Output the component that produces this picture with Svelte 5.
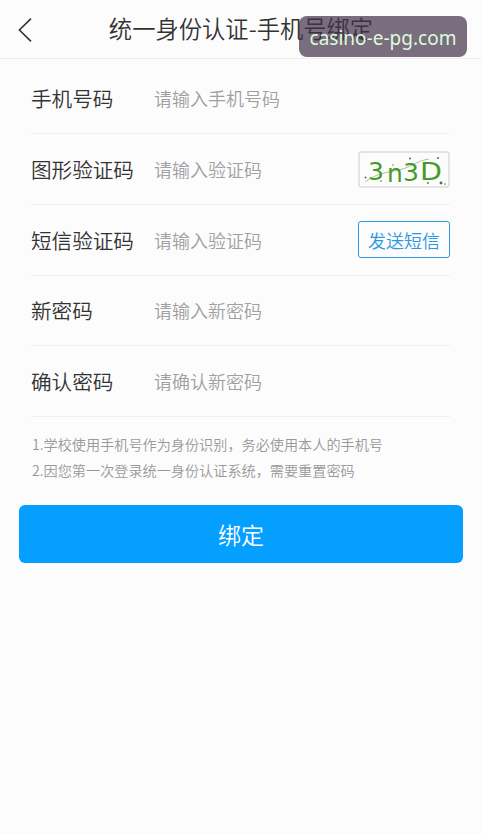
<script>
  let fields = $state([
    { id: "phone", label: "手机号码", hint: "请输入手机号码", type: "tel", value: "" },
    { id: "captcha", label: "图形验证码", hint: "请输入验证码", type: "text", value: "" },
    { id: "sms", label: "短信验证码", hint: "请输入验证码", type: "text", value: "" },
    { id: "password", label: "新密码", hint: "请输入新密码", type: "password", value: "" },
    { id: "confirm", label: "确认密码", hint: "请确认新密码", type: "password", value: "" },
  ]);
</script>

<div class="page">
  <header>
    <button class="back" aria-label="返回">
      <svg width="14" height="26" viewBox="0 0 14 26">
        <path d="M13 1.6 L1.4 13 L13 24.4" fill="none" stroke="#333" stroke-width="1.6" />
      </svg>
    </button>
    <h1>统一身份认证-手机号绑定</h1>
    <span class="site-tag">casino-e-pg.com</span>
  </header>

  <form>
    {#each fields as field (field.id)}
      <div class="row">
        <label for={field.id}>{field.label}</label>
        <input id={field.id} type={field.type} placeholder={field.hint} bind:value={field.value} />

        {#if field.id === "captcha"}
          <svg class="captcha" width="92" height="37" viewBox="0 0 92 37">
            <rect x="1" y="1" width="90" height="35" rx="2.5" fill="#fcfdfa" stroke="#dcdce0" stroke-width="1.5" />
            <path d="M7 31 C22 19 38 22 50 16 S65 9 71 8" fill="none" stroke="#a9c2a0" stroke-width="1" />
            <g class="chars">
              <text x="10" y="29">3</text>
              <text x="29" y="31">n</text>
              <text x="45" y="30">3</text>
              <text x="62" y="29" textLength="22" lengthAdjust="spacingAndGlyphs">D</text>
            </g>
            <g fill="#4b7043">
              <circle cx="52" cy="7.5" r="1" />
              <circle cx="80" cy="7" r="1" />
              <circle cx="7.5" cy="26.5" r="1" />
              <circle cx="23" cy="30" r="0.8" />
              <circle cx="70" cy="32" r="0.9" />
              <circle cx="83" cy="32" r="1.4" />
              <circle cx="87" cy="33" r="0.8" />
              <circle cx="35" cy="14" r="0.7" />
            </g>
          </svg>
        {:else if field.id === "sms"}
          <button class="send" type="button">发送短信</button>
        {/if}
      </div>
    {/each}

    <div class="notes">
      <p>1.学校使用手机号作为身份识别，务必使用本人的手机号</p>
      <p>2.因您第一次登录统一身份认证系统，需要重置密码</p>
    </div>

    <button class="submit" type="button">绑定</button>
  </form>
</div>

<style>
  :global(body) {
    background: #fdfcfc;
  }

  .page {
    min-height: 834px;
    font-family: "Noto Sans CJK SC", sans-serif;
    font-weight: 350;
    color: #333;
  }

  button,
  input {
    font: inherit;
    padding: 0;
    border: 0;
    background: none;
  }

  header {
    position: relative;
    display: flex;
    align-items: center;
    justify-content: center;
    box-sizing: border-box;
    height: 59px;
    border-bottom: 1px solid #eeeeee;
  }

  .back {
    position: absolute;
    left: 18px;
    top: 17px;
    height: 26px;
  }

  .back svg {
    display: block;
  }

  h1 {
    margin: 0;
    padding-bottom: 2px;
    font-size: 23.3px;
    font-weight: 350;
    line-height: 55px;
  }

  .site-tag {
    position: absolute;
    left: 299px;
    top: 16px;
    width: 168px;
    height: 41px;
    border-radius: 8px;
    background: rgba(64, 48, 73, 0.7);
    color: #dcfbdc;
    font-family: "Noto Sans", sans-serif;
    font-size: 19px;
    font-weight: 400;
    line-height: 45px;
    text-align: center;
  }

  .row {
    display: flex;
    align-items: center;
    box-sizing: border-box;
    height: 70.8px;
    margin: 0 32px 0 31px;
    border-bottom: 1px solid #f0f0f4;
  }

  .row:first-child {
    height: 75px;
    padding-top: 4px;
  }

  label {
    width: 123px;
    font-size: 20.6px;
  }

  input {
    flex: 1;
    min-width: 0;
    height: 40px;
    outline: 0;
    font-size: 18px;
  }

  input::placeholder {
    color: #a0a0a0;
    opacity: 1;
  }

  .captcha {
    flex: none;
    margin-top: 1px;
  }

  .chars {
    fill: #459a2c;
    font-family: "DejaVu Sans", sans-serif;
    font-size: 25px;
    font-weight: 400;
  }

  .send {
    width: 92px;
    height: 37px;
    border: 1.5px solid #2c9be0;
    border-radius: 3px;
    color: #2a98e2;
    font-size: 18px;
  }

  .notes {
    margin: 14px 32px 0;
    color: #999;
    font-size: 14.15px;
    line-height: 26px;
  }

  .notes p {
    margin: 0;
    white-space: nowrap;
  }

  .submit {
    display: block;
    width: 444px;
    height: 58px;
    margin: 22px 0 0 19px;
    border-radius: 6px;
    background: #049fff;
    color: #fff;
    font-size: 23px;
  }
</style>
